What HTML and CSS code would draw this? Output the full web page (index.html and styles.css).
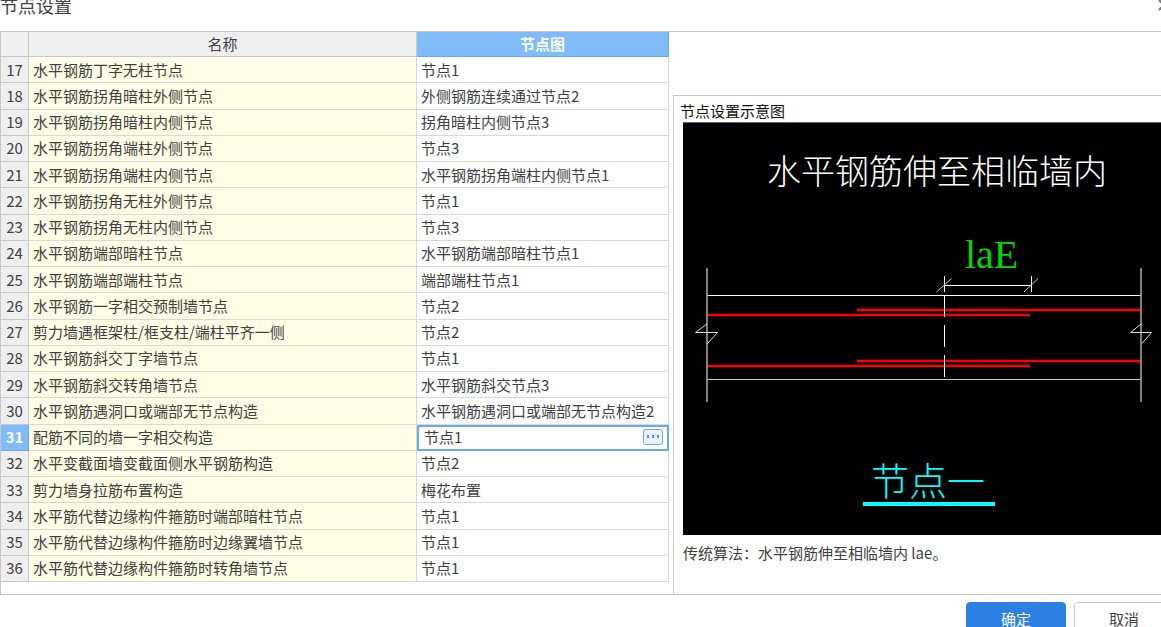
FILE: index.html
```html
<!DOCTYPE html>
<html lang="zh-CN">
<head>
<meta charset="utf-8">
<title>节点设置</title>
<link rel="stylesheet" href="styles.css">
</head>
<body>
<div class="dialog">
  <header class="titlebar">
    <h1 class="title">节点设置</h1>
    <button class="close" type="button" aria-label="关闭"><svg width="12" height="12" viewBox="0 0 12 12"><path d="M1 0L11 10M11 0L1 10" stroke="#777" stroke-width="2" fill="none"/></svg></button>
  </header>
  <main class="content">
    <section class="list">
      <table class="nodes">
        <colgroup><col class="col-index"><col class="col-name"><col class="col-node"></colgroup>
        <thead><tr><th class="corner"></th><th>名称</th><th class="active">节点图</th></tr></thead>
        <tbody>
          <tr><th>17</th><td>水平钢筋丁字无柱节点</td><td>节点1</td></tr>
          <tr><th>18</th><td>水平钢筋拐角暗柱外侧节点</td><td>外侧钢筋连续通过节点2</td></tr>
          <tr><th>19</th><td>水平钢筋拐角暗柱内侧节点</td><td>拐角暗柱内侧节点3</td></tr>
          <tr><th>20</th><td>水平钢筋拐角端柱外侧节点</td><td>节点3</td></tr>
          <tr><th>21</th><td>水平钢筋拐角端柱内侧节点</td><td>水平钢筋拐角端柱内侧节点1</td></tr>
          <tr><th>22</th><td>水平钢筋拐角无柱外侧节点</td><td>节点1</td></tr>
          <tr><th>23</th><td>水平钢筋拐角无柱内侧节点</td><td>节点3</td></tr>
          <tr><th>24</th><td>水平钢筋端部暗柱节点</td><td>水平钢筋端部暗柱节点1</td></tr>
          <tr><th>25</th><td>水平钢筋端部端柱节点</td><td>端部端柱节点1</td></tr>
          <tr><th>26</th><td>水平钢筋一字相交预制墙节点</td><td>节点2</td></tr>
          <tr><th>27</th><td>剪力墙遇框架柱/框支柱/端柱平齐一侧</td><td>节点2</td></tr>
          <tr><th>28</th><td>水平钢筋斜交丁字墙节点</td><td>节点1</td></tr>
          <tr><th>29</th><td>水平钢筋斜交转角墙节点</td><td>水平钢筋斜交节点3</td></tr>
          <tr><th>30</th><td>水平钢筋遇洞口或端部无节点构造</td><td>水平钢筋遇洞口或端部无节点构造2</td></tr>
          <tr class="selected"><th>31</th><td>配筋不同的墙一字相交构造</td><td class="editing"><div class="editor"><input class="field" type="text" value="节点1" aria-label="节点图"><button class="more" type="button" aria-label="选择节点"><svg width="14" height="4" viewBox="0 0 14 4" fill="#4a90e2"><rect x="1" y="0" width="2" height="3"/><rect x="6" y="0" width="2" height="3"/><rect x="11" y="0" width="2" height="3"/></svg></button></div></td></tr>
          <tr><th>32</th><td>水平变截面墙变截面侧水平钢筋构造</td><td>节点2</td></tr>
          <tr><th>33</th><td>剪力墙身拉筋布置构造</td><td>梅花布置</td></tr>
          <tr><th>34</th><td>水平筋代替边缘构件箍筋时端部暗柱节点</td><td>节点1</td></tr>
          <tr><th>35</th><td>水平筋代替边缘构件箍筋时边缘翼墙节点</td><td>节点1</td></tr>
          <tr><th>36</th><td>水平筋代替边缘构件箍筋时转角墙节点</td><td>节点1</td></tr>
        </tbody>
      </table>
    </section>
    <section class="preview">
      <h2 class="preview-title">节点设置示意图</h2>
      <div class="canvas">
        <svg class="drawing" viewBox="0 0 478 412" role="img" aria-label="节点设置示意图">
          <text class="cad-title" x="84" y="61">水平钢筋伸至相临墙内</text>
          <text class="cad-dim" x="282" y="145">laE</text>
          <path d="M24 192H347M174 187H458M24 243H347M174 238H458" stroke="#f00" stroke-width="2.6" fill="none"/>
          <g fill="none" stroke="#fff" stroke-width="1">
            <path d="M24 172.5H458M261 162.5H348M261.5 153V169M348.5 153V169M261.5 173V194M261.5 202V224M261.5 232V254"/>
            <path stroke="#ccc" d="M24 256.5H458M253.5 169L268.5 155.5M341 169L355 155.5"/>
          </g>
          <g fill="none" stroke="#a0a0a0">
            <path stroke-width="1.6" d="M24 145V279M458 145V279"/>
            <path stroke="#ddd" d="M24 201L12.5 209.5H34.5L24.5 220.5M458 201L447.5 209.5H468.5L459 220.5"/>
          </g>
          <text class="cad-name" x="188" y="372">节点一</text>
          <rect x="180" y="379" width="132" height="4" fill="#0ff"/>
        </svg>
      </div>
      <p class="note">传统算法：水平钢筋伸至相临墙内 lae。</p>
    </section>
  </main>
  <footer class="actions">
    <button class="btn primary" type="button">确定</button>
    <button class="btn" type="button">取消</button>
  </footer>
</div>
</body>
</html>
```
FILE: styles.css
```css
* { box-sizing: border-box; }
body {
  margin: 0;
  background: #fff;
  color: #404040;
  font: 15px/20px "Noto Sans CJK SC", sans-serif;
}
button, input { font: inherit; color: inherit; }
.dialog {
  display: flex;
  flex-direction: column;
  height: 100vh;
  overflow: hidden;
}
.titlebar {
  display: flex;
  justify-content: space-between;
  align-items: flex-start;
  flex: 0 0 31px;
}
.title {
  margin: 0;
  font-size: 18px;
  line-height: 10px;
  font-weight: 400;
}
.close {
  display: flex;
  margin-right: -9px;
  padding: 0;
  border: 0;
  background: none;
}
.content {
  flex: 1;
  min-height: 0;
  display: grid;
  grid-template-columns: minmax(0, 673fr) minmax(0, 488fr);
  grid-template-rows: minmax(0, 1fr);
  border-top: 1px solid #c8c8c8;
  border-bottom: 1px solid #c8c8c8;
}
.list { padding: 0 4px 12px 0; border-left: 1px solid #c8c8c8; }
.nodes {
  width: 100%;
  height: 100%;
  table-layout: fixed;
  border-collapse: separate;
  border-spacing: 0;
}
.col-index { width: 28px; }
.col-name { width: 388px; }
.nodes th, .nodes td {
  padding: 0 4px;
  border: solid #d8d8d8;
  border-width: 0 1px 1px 0;
  font-weight: 400;
  text-align: left;
  white-space: nowrap;
  overflow: hidden;
}
.nodes th {
  padding: 0;
  background: #efefef;
  border-color: #c8c8c8;
  text-align: center;
}
.nodes thead th { height: 25px; }
.nodes td:nth-child(2) { background: #fffde6; }
.nodes thead .active, .nodes .selected th {
  background: #80bbfa;
  border-color: #69aae9;
  color: #fff;
  font-weight: 700;
}
.nodes .editing {
  padding: 0;
  overflow: visible;
  outline: 2px solid #69aae9;
  outline-offset: -2px;
}
.editor { display: flex; align-items: center; padding: 0 5px 0 7px; }
.field {
  flex: 1;
  min-width: 0;
  height: 20px;
  padding: 0;
  border: 0;
  outline: 0;
  background: none;
}
.more {
  display: flex;
  align-items: center;
  justify-content: center;
  width: 20px;
  height: 16px;
  padding: 0;
  border: 1px solid #69aae9;
  border-radius: 3px;
  background: #ebf0fa;
}
.preview {
  display: flex;
  flex-direction: column;
  margin-top: 63px;
  padding-left: 9px;
  border: solid #c8c8c8;
  border-width: 1px 0 0 1px;
}
.preview-title {
  margin: 0 0 0 -3px;
  padding: 5px 0 1px;
  color: #111;
  font-size: 15px;
  font-weight: 400;
}
.canvas { flex: 1; min-height: 0; background: #000; border-top: 1px solid #666; }
.drawing { display: block; width: 100%; height: 100%; }
.cad-title, .cad-name { font-family: "Noto Sans CJK SC", sans-serif; font-weight: 300; }
.cad-title { font-size: 34px; fill: #fff; }
.cad-dim { font: 40px "Liberation Serif", serif; fill: #00d800; }
.cad-name { font-size: 38px; fill: #0ff; }
.note { margin: 0; padding: 8px 0 31px; }
.actions {
  flex: 0 0 32px;
  height: 32px;
  min-height: 0;
  display: flex;
  justify-content: flex-end;
  align-items: flex-start;
  gap: 8px;
  margin-right: -13px;
  padding-top: 7px;
}
.btn {
  width: 100px;
  height: 34px;
  flex: none;
  padding: 0;
  border: 1px solid #c8c8c8;
  border-radius: 4px;
  background: #fff;
}
.btn.primary { border-color: #2c80e4; background: #2c80e4; color: #fff; }
```
